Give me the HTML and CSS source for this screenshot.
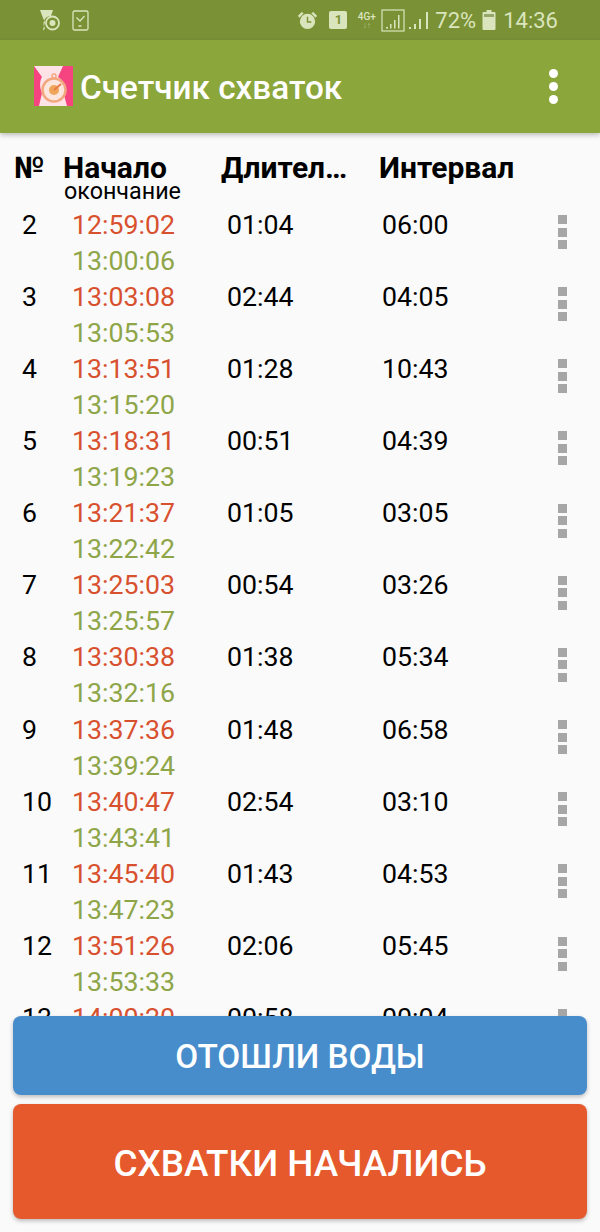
FILE: index.html
```html
<!DOCTYPE html>
<html lang="ru">
<head>
    <meta charset="UTF-8">
    <meta name="viewport" content="width=device-width, initial-scale=1.0">
    <title>Счетчик схваток</title>
    <link rel="stylesheet" href="styles.css">
</head>
<body>
    <div class="status-bar">
        <div class="status-left">
            <svg class="icon" width="20" height="21" viewBox="0 0 20 21">
                <path d="M0 0h13l-2 6a7.500 7.500 0 0 0-6 12l-1 2H3l2-8-2-4z" fill="#dbe5bd"/>
                <circle cx="12.500" cy="13" r="6.500" fill="none" stroke="#dbe5bd" stroke-width="1.800"/>
                <circle cx="12.500" cy="13" r="3" fill="#dbe5bd"/>
            </svg>
            <svg class="icon" width="17" height="21" viewBox="0 0 17 21">
                <rect x="1" y="1" width="15" height="19" rx="1.500" fill="none" stroke="#dbe5bd" stroke-width="1.300"/>
                <path d="M4.500 7.500l3.500 3.500 4.500-5M6.500 16h3" fill="none" stroke="#dbe5bd" stroke-width="1.300"/>
            </svg>
        </div>
        <div class="status-right">
            <svg class="icon alarm" width="21" height="21" viewBox="0 0 22 22">
                <circle cx="11" cy="12" r="8" fill="#dbe5bd"/>
                <path d="M1 6l4-4 2 1.500-4.500 4.500zM21 6l-4-4-2 1.500 4.500 4.500z" fill="#dbe5bd"/>
                <path d="M11 7v5.500h4" fill="none" stroke="#7a9136" stroke-width="1.500"/>
            </svg>
            <div class="sim">1</div>
            <div class="net"><b>4G+</b><i>↓↑</i></div>
            <svg class="icon box-signal" width="24" height="23" viewBox="0 0 24 23">
                <rect x="1" y="1" width="22" height="21" fill="none" stroke="#dbe5bd" stroke-width="1.200"/>
                <path d="M5 18h2v1.500H5zM9 15h1.500v4.500H9zM13 11h1.500v8.500H13zM17 6h1.500v13.500H17z" fill="#dbe5bd"/>
            </svg>
            <svg class="icon signal" width="20" height="22" viewBox="0 0 20 22">
                <path d="M0 18h2v2H0zM5 15h2v5H5zM10 10h2v10h-2zM17 3h2v17h-2z" fill="#dbe5bd"/>
            </svg>
            <span class="status-text pct">72%</span>
            <svg class="icon battery" width="14" height="20" viewBox="0 0 14 20">
                <path d="M4.500 0h5v2h3a1 1 0 0 1 1 1v16a1 1 0 0 1-1 1h-11a1 1 0 0 1-1-1V3a1 1 0 0 1 1-1h3z" fill="#dbe5bd"/>
                <rect x="2" y="4" width="10" height="3" fill="#95a86a"/>
            </svg>
            <span class="status-text">14:36</span>
        </div>
    </div>

    <header class="app-bar">
        <svg class="logo" width="39" height="40" viewBox="0 0 39 40">
            <rect width="39" height="40" fill="#f5447f"/>
            <path d="M0 0h29l-5 11c8 5 9 13 6 18l3 11H5l3-13C5 20 6 14 8 11z" fill="#fde2e6"/>
            <circle cx="20" cy="24" r="11.500" fill="#fde6de" stroke="#f2a77e" stroke-width="2.500"/>
            <circle cx="20" cy="10" r="2" fill="none" stroke="#f2a77e" stroke-width="1.500"/>
            <circle cx="20" cy="24" r="5" fill="#f0a65a"/>
            <path d="M20 24l7-6" stroke="#ea7b45" stroke-width="2"/>
        </svg>
        <h1 class="app-title">Счетчик схваток</h1>
        <div class="overflow"><span></span><span></span><span></span></div>
    </header>

    <div class="head-row">
        <div class="num-col">№</div>
        <div class="time-col">Начало<small>окончание</small></div>
        <div class="dur-col">Длител…</div>
        <div class="int-col">Интервал</div>
    </div>

    <main class="list" id="list"></main>

    <footer class="actions">
        <button class="btn btn-water">ОТОШЛИ ВОДЫ</button>
        <button class="btn btn-start">СХВАТКИ НАЧАЛИСЬ</button>
    </footer>

    <script>
        const rows = [
            [2, "12:59:02", "13:00:06", "01:04", "06:00"],
            [3, "13:03:08", "13:05:53", "02:44", "04:05"],
            [4, "13:13:51", "13:15:20", "01:28", "10:43"],
            [5, "13:18:31", "13:19:23", "00:51", "04:39"],
            [6, "13:21:37", "13:22:42", "01:05", "03:05"],
            [7, "13:25:03", "13:25:57", "00:54", "03:26"],
            [8, "13:30:38", "13:32:16", "01:38", "05:34"],
            [9, "13:37:36", "13:39:24", "01:48", "06:58"],
            [10, "13:40:47", "13:43:41", "02:54", "03:10"],
            [11, "13:45:40", "13:47:23", "01:43", "04:53"],
            [12, "13:51:26", "13:53:33", "02:06", "05:45"],
            [13, "14:00:20", "14:01:18", "00:58", "00:04"]
        ];

        const list = document.getElementById("list");
        rows.forEach(r => {
            list.innerHTML += `<div class="row">
                <div class="num-col">${r[0]}</div>
                <div class="time-col"><div class="start">${r[1]}</div><div class="end">${r[2]}</div></div>
                <div class="dur-col">${r[3]}</div>
                <div class="int-col">${r[4]}</div>
                <div class="row-menu"><span></span><span></span><span></span></div>
            </div>`;
        });
    </script>
</body>
</html>
```

FILE: styles.css
```css
* {
    box-sizing: border-box;
}

html, body {
    height: 100%;
}

body {
    margin: 0;
    display: flex;
    flex-direction: column;
    overflow: hidden;
    font-family: Roboto, "Noto Sans", sans-serif;
    color: #000;
    background: #fafafa;
}

.status-bar {
    height: 40px;
    flex: none;
    display: flex;
    align-items: center;
    justify-content: space-between;
    padding: 0 42px 0 40px;
    background: #7a9136;
}

.status-left, .status-right {
    display: flex;
    align-items: center;
}

.status-left {
    gap: 12px;
}

.icon {
    display: block;
    flex: none;
}

.sim {
    width: 18px;
    height: 18px;
    margin-left: 11px;
    border-radius: 2px;
    background: #dbe5bd;
    color: #7a9136;
    font-size: 13px;
    font-weight: 700;
    line-height: 18px;
    text-align: center;
}

.net {
    display: flex;
    flex-direction: column;
    align-items: center;
    width: 21px;
    margin-left: 9px;
    color: #dbe5bd;
    font-size: 10px;
    line-height: 11px;
}

.net b {
    font-weight: 500;
}

.net i {
    font-style: normal;
    font-size: 8px;
    line-height: 8px;
    opacity: 0.6;
}

.box-signal {
    margin-left: 4px;
}

.signal {
    margin-left: 4px;
}

.status-text {
    color: #dbe5bd;
    font-size: 22px;
    margin-left: 7px;
}

.pct {
    margin-left: 6px;
}

.battery {
    margin-left: 6px;
}

.app-bar {
    height: 93px;
    flex: none;
    display: flex;
    align-items: center;
    position: relative;
    z-index: 1;
    padding: 0 42px 0 34px;
    background: #8ba63a;
    box-shadow: 0 2px 5px rgba(0, 0, 0, 0.25);
}

.logo {
    flex: none;
    margin-top: -1px;
}

.app-title {
    margin: 2px 0 0 7px;
    flex: 1;
    color: #fff;
    font-size: 33.300px;
    font-weight: 500;
}

.overflow {
    display: flex;
    flex-direction: column;
    gap: 3.500px;
}

.overflow span {
    width: 9.500px;
    height: 9.500px;
    border-radius: 50%;
    background: #fff;
}

.head-row, .row {
    display: grid;
    padding-left: 14px;
}

.head-row {
    height: 69px;
    flex: none;
    padding-top: 19px;
    grid-template-columns: 50px 157px 158px 1fr;
    font-size: 30px;
    font-weight: 700;
    line-height: 32px;
}

.head-row .time-col {
    margin-left: -1px;
}

.head-row small {
    display: block;
    margin-top: -5px;
    margin-left: 1px;
    font-size: 23.300px;
    font-weight: 400;
    line-height: 24px;
}

.list {
    flex: 1;
    min-height: 0;
    overflow: hidden;
    padding-top: 4.500px;
}

.row {
    position: relative;
    height: 72.170px;
    grid-template-columns: 58px 155px 155px 1fr;
    font-size: 26.700px;
    line-height: 36px;
}

.row .num-col {
    padding-left: 8px;
}

.start {
    color: #d8512f;
}

.end {
    color: #8ea548;
}

.row-menu {
    position: absolute;
    top: 8.500px;
    left: 557.500px;
    display: flex;
    flex-direction: column;
    gap: 3.500px;
}

.row-menu span {
    width: 9px;
    height: 9px;
    background: #a6a6a6;
}

.actions {
    flex: none;
    display: flex;
    flex-direction: column;
    gap: 9px;
    padding: 0 13px 13px;
}

.btn {
    width: 100%;
    border: 0;
    border-radius: 8px;
    padding-top: 2px;
    color: #fff;
    font-family: inherit;
    font-weight: 500;
    box-shadow: 0 2px 4px rgba(0, 0, 0, 0.25);
}

.btn-water {
    height: 79px;
    background: #478ccb;
    font-size: 33.300px;
}

.btn-start {
    height: 115px;
    padding-top: 4px;
    background: #e5592c;
    font-size: 36.800px;
}
```
